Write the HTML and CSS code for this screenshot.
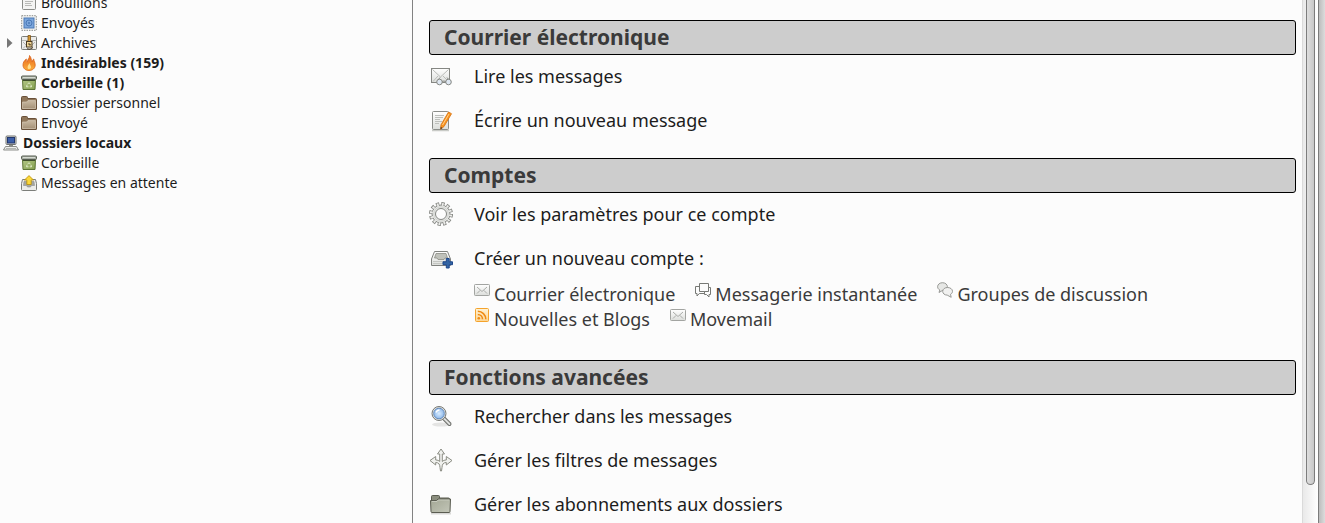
FILE: index.html
```html
<!DOCTYPE html>
<html lang="fr">
<head>
<meta charset="utf-8">
<title>Courrier</title>
<link rel="stylesheet" href="styles.css">
</head>
<body>
<svg class="defs" aria-hidden="true">
  <defs>
    <linearGradient id="g-paper" x1="0" y1="0" x2="0" y2="1"><stop offset="0" stop-color="#fff"/><stop offset="1" stop-color="#dcdedb"/></linearGradient>
    <linearGradient id="g-tan" x1="0" y1="0" x2="0" y2="1"><stop offset="0" stop-color="#c9b9a2"/><stop offset="1" stop-color="#a69278"/></linearGradient>
    <linearGradient id="g-olive" x1="0" y1="0" x2="1" y2="1"><stop offset="0" stop-color="#a3a795"/><stop offset="1" stop-color="#c3c6b8"/></linearGradient>
    <linearGradient id="g-green" x1="0" y1="0" x2="1" y2="1"><stop offset="0" stop-color="#b3c787"/><stop offset="1" stop-color="#84a04e"/></linearGradient>
    <linearGradient id="g-fire" x1="0" y1="0" x2="0" y2="1"><stop offset="0" stop-color="#e9661d"/><stop offset="1" stop-color="#fbb03c"/></linearGradient>
    <linearGradient id="g-rss" x1="0" y1="0" x2="0" y2="1"><stop offset="0" stop-color="#fff3d6"/><stop offset="1" stop-color="#fbd594"/></linearGradient>
    <radialGradient id="g-lens"><stop offset="0" stop-color="#d9ecff"/><stop offset="1" stop-color="#8fb9ea"/></radialGradient>
  </defs>
  <symbol id="i-folder" viewBox="0 0 16 16">
    <path d="M.5 14V2.500q0-1 1-1h4q1 0 1 1v1h8q1 0 1 1V14q0 .5-.5.5H1q-.5 0-.5-.5z" fill="#8f7558" stroke="#695039"/>
    <path d="M1.500 13.500V7h4l1.500-1.500h7.500v8z" fill="url(#g-tan)" stroke="#d3c6b3" stroke-width=".7"/>
  </symbol>
  <symbol id="i-trash" viewBox="0 0 16 16">
    <path d="M1.500 4.500h13l-.5 10H2z" fill="url(#g-green)" stroke="#5d7537"/>
    <path d="M2 5.500h12" stroke="#3f4f2b"/>
    <rect x=".5" y="1" width="15" height="3.500" rx="1" fill="#a9afa5" stroke="#565d51"/>
    <path d="M2 2.500h12" stroke="#d5dad1"/>
    <path d="M6.500 9.300 8 7.700l1.500 1.600M6 10l-.5 1.800h2M10 10l.6 1.800H8.700" fill="none" stroke="#e8f2d4" stroke-width=".9"/>
  </symbol>
  <symbol id="i-mail" viewBox="0 0 16 16">
    <rect x=".5" y="2.500" width="15" height="11" rx=".8" fill="url(#g-paper)" stroke="#a2a4a1"/>
    <path d="M3 5l5 4.500L13 5M3 11.500 6.200 8.300M13 11.500 9.800 8.300" fill="none" stroke="#aaaca9"/>
  </symbol>
</svg>

<div class="window">
  <nav class="folders" aria-label="Dossiers">
    <ul class="tree">
      <li class="node"><svg class="ico" viewBox="0 0 16 16"><rect x="1.500" y=".5" width="13" height="14" rx="1" fill="#f4f4f3" stroke="#8b8d89"/><path d="M4 6.500h8M4 8.500h6M4 10.500h7" stroke="#b9bab7"/></svg>Brouillons</li>
      <li class="node"><svg class="ico" viewBox="0 0 16 16"><rect x=".7" y=".7" width="14.600" height="14.600" fill="#f3f3f1" stroke="#8b8d89" stroke-dasharray="1.500 1"/><rect x="3" y="3" width="10" height="10" fill="#7ba6dc" stroke="#4a78b6"/><circle cx="8" cy="8" r="3" fill="none" stroke="#4a78b6"/><circle cx="8" cy="8" r="1" fill="#4a78b6"/></svg>Envoyés</li>
      <li class="node node-parent"><svg class="twisty" viewBox="0 0 6 10"><path d="M0 0v10l5.500-5z" fill="#777"/></svg><svg class="ico" viewBox="0 0 16 16"><rect x=".5" y="1.500" width="15" height="13" rx="1" fill="#ececea" stroke="#7c7e7a"/><path d="M1 5.500h14M2 7l4 4M14 7l-4 4M2 13.500l3-3" stroke="#b4b6b2" fill="none"/><path d="M7 .5h2.500v6H7z" fill="#d79a33" stroke="#7b5216" stroke-width=".8"/><rect x="5.500" y="6.500" width="5.500" height="5.500" fill="#efd596" stroke="#4a3a22"/><path d="M8 8v1.800h2M6 13.800q3 1.500 6-1.300" stroke="#4a3a22" fill="none"/></svg>Archives</li>
      <li class="node node-bold"><svg class="ico" viewBox="0 0 16 16"><path d="M8.500.5C9 3 6.500 4 6.300 7 5.200 6.400 5.200 5 5.400 4 3 5.700 2 7.800 2 10c0 3.500 2.700 5.500 6 5.500s6.200-2 6.200-5.500c0-2.500-1.300-4-1.500-6-1 .8-1.400 1.800-1.400 3C10 5.500 10.500 2.500 8.500.5z" fill="url(#g-fire)" stroke="#d9641a" stroke-width=".8"/><path d="M8.500 8c-.5 1.500-1.900 2.500-1.900 4.200 0 1.300.6 1.800 1.600 1.800s1.900-.8 1.800-2C9.900 10.500 8.700 9.500 8.500 8z" fill="#ffe08f"/></svg>Indésirables (159)</li>
      <li class="node node-bold"><svg class="ico"><use href="#i-trash"/></svg>Corbeille (1)</li>
      <li class="node"><svg class="ico"><use href="#i-folder"/></svg>Dossier personnel</li>
      <li class="node"><svg class="ico"><use href="#i-folder"/></svg>Envoyé</li>
      <li class="node node-root node-bold"><svg class="ico" viewBox="0 0 16 16"><rect x="3" y="1" width="10" height="8.500" rx="1" fill="#dcdcda" stroke="#70726e"/><rect x="4.500" y="2.500" width="7" height="5.500" fill="#3c5fa8" stroke="#22376c"/><path d="M6 10h4v1.500H6z" fill="#8b8d89"/><path d="M2.500 11.500h11l2 3.500H.5z" fill="#eeeeec" stroke="#8b8d89"/><path d="M3 13.500h10" stroke="#b5b7b3"/></svg>Dossiers locaux</li>
      <li class="node"><svg class="ico"><use href="#i-trash"/></svg>Corbeille</li>
      <li class="node"><svg class="ico" viewBox="0 0 16 16"><path d="M1.500 4.500h13l1 4v6q0 1-1 1h-13q-1 0-1-1v-6z" fill="#ececea" stroke="#7c7e7a"/><path d="M3 6.500h10l.5 4h-3l-1 1.500h-3l-1-1.500h-3z" fill="#a4a6a2" stroke="#8b8d89" stroke-width=".6"/><path d="M8 .6 12.500 5h-2.300v4.500H5.800V5H3.500z" fill="#fbd83a" stroke="#b78d06" stroke-width=".8"/></svg>Messages en attente</li>
    </ul>
  </nav>

  <main class="account">
    <section class="group">
      <h2 class="title">Courrier électronique</h2>
      <a class="action" href="#"><svg class="big" viewBox="0 0 24 24"><rect x="2.500" y="4.500" width="18" height="14" fill="url(#g-paper)" stroke="#858783"/><path d="M3.500 5.500 11.500 13l8-7.500M4 17.500l5-5.500M19 17l-5-5" fill="none" stroke="#b9bbb7"/><path d="M9 16l2-2.500M20 16l-2-2.500" stroke="#858783"/><circle cx="10.500" cy="18" r="2.800" fill="#dfe8f3" stroke="#858783"/><circle cx="19.500" cy="18" r="2.800" fill="#dfe8f3" stroke="#858783"/><path d="M13.300 17.500q1.500-1 3.400 0" fill="none" stroke="#858783"/></svg>Lire les messages</a>
      <a class="action" href="#"><svg class="big" viewBox="0 0 24 24"><path d="M3 22.500h17" stroke="#c9cbc7" stroke-width="1.500"/><rect x="3.500" y="3.500" width="16" height="18" rx="1" fill="url(#g-paper)" stroke="#8b8d89"/><path d="M6 7.500h9M6 9.500h8M6 11.500h5M6 13.500h7M6 15.500h4" stroke="#bdbfbb"/><path d="M19.500 4l3 1.700L15 18.500l-3.500 2.800.5-4.500z" fill="#f9941f" stroke="#d9781a" stroke-width=".9"/><path d="M20 6l-6.500 11" stroke="#ffd08b"/><path d="M11.500 21.300l.3-2.300 1.700 1z" fill="#333"/></svg>Écrire un nouveau message</a>
    </section>

    <section class="group group-accounts">
      <h2 class="title">Comptes</h2>
      <a class="action" href="#"><svg class="big" viewBox="0 0 24 24"><circle cx="12" cy="12" r="10" fill="none" stroke="#858783" stroke-width="4" stroke-dasharray="3.200 2.036"/><circle cx="12" cy="12" r="9" fill="#e6e7e5" stroke="#858783"/><circle cx="12" cy="12" r="9.700" fill="none" stroke="#eeeeec" stroke-width="2.800" stroke-dasharray="1.700 3.379" stroke-dashoffset="-.702"/><circle cx="12" cy="12" r="5.500" fill="#fcfcfc" stroke="#858783"/><circle cx="12" cy="12" r="7.200" fill="none" stroke="#d0d2ce"/></svg>Voir les paramètres pour ce compte</a>
      <a class="action" href="#"><svg class="big" viewBox="0 0 24 24"><path d="M5.500 5.500h13l3 7.500v6.500h-19V13z" fill="url(#g-paper)" stroke="#80827e"/><path d="M7 7.500h10l1.500 4.500H16l-1 1.500H9L8 12H5.500z" fill="#c0c2bb" stroke="#8b8d84" stroke-width=".8"/><path d="M4 15.500h16M4 17.500h12" stroke="#c4c6c2"/><path d="M17.300 12.500h2.900v3.300h3.300v2.900h-3.300V22h-2.900v-3.300H14v-2.900h3.300z" fill="#3465a4" stroke="#1d468b"/></svg>Créer un nouveau compte :</a>
      <div class="kinds">
        <a class="kind" href="#"><svg class="ico"><use href="#i-mail"/></svg>Courrier électronique</a>
        <a class="kind" href="#"><svg class="ico" viewBox="0 0 16 16"><path d="M4.500 4.500h-4v7h1.500v2.500l2.300-2.500h5.200v-2" fill="#fcfcfc" stroke="#777975"/><path d="M4.500 1.500h9v8h-9z" fill="#fcfcfc" stroke="#777975"/><path d="M13.500 5.500h2v7H14v2.500L11.500 12.500h-2v-3h4z" fill="#fcfcfc" stroke="#777975"/></svg>Messagerie instantanée</a>
        <a class="kind" href="#"><svg class="ico" viewBox="0 0 16 16"><path d="M5.500.7C2.800.7.6 2.400.6 4.700c0 1.600 1 2.700 2.200 3.300L2 10.500l3.400-2c2.800 0 5-1.600 5-3.800S8.300.7 5.500.7z" fill="#e6e7e5" stroke="#8d8f8b" stroke-width=".9"/><path d="M10.500 5.500c-2.500 0-4.800 1.500-4.800 3.800s2 3.800 4.500 3.800l4 2.200-.7-3c1.200-.6 2-1.700 2-3 0-2.200-2.200-3.800-5-3.800z" fill="#f1f1f0" stroke="#8d8f8b" stroke-width=".9"/></svg>Groupes de discussion</a>
        <a class="kind" href="#"><svg class="ico" viewBox="0 0 16 16"><rect x="1.500" y="1.500" width="13" height="13" rx="1" fill="url(#g-rss)" stroke="#f5a32b"/><circle cx="4.800" cy="11.300" r="1.300" fill="#f08a12"/><path d="M3.800 7.500a4.700 4.700 0 0 1 4.700 4.700M3.800 4.300a8 8 0 0 1 8 8" fill="none" stroke="#f08a12" stroke-width="1.500"/></svg>Nouvelles et Blogs</a>
        <a class="kind" href="#"><svg class="ico"><use href="#i-mail"/></svg>Movemail</a>
      </div>
    </section>

    <section class="group">
      <h2 class="title">Fonctions avancées</h2>
      <a class="action" href="#"><svg class="big" viewBox="0 0 24 24"><ellipse cx="12" cy="20.500" rx="9" ry="2" fill="#e4e4e3"/><path d="M14.500 14l6 6" stroke="#6f716d" stroke-width="4" stroke-linecap="round"/><path d="M15 14.500l5.500 5.500" stroke="#e0e1df" stroke-width="1.800" stroke-linecap="round"/><circle cx="10" cy="9.500" r="7" fill="#dfe0de" stroke="#777975"/><circle cx="10" cy="9.500" r="5.300" fill="url(#g-lens)" stroke="#5f86b8" stroke-width=".9"/><path d="M7 8.500q1-2.500 3.500-2.500" fill="none" stroke="#fff" stroke-width="1.500"/></svg>Rechercher dans les messages</a>
      <a class="action" href="#"><svg class="big" viewBox="0 0 24 24"><path d="M12 1l3.500 5h-2.200v7.500c1-1 2-1.500 4-1.500V8.500L23 12.500 17.300 17v-2.500c-3 .2-4.100 1.500-4.300 5L12.500 23h-1l-.5-3.500c-.2-3.500-1.300-4.800-4.300-5V17L1 12.500 6.700 8.500V12c2 0 3 .5 4 1.500V6H8.500z" fill="#f0f1ee" stroke="#8b8d84"/></svg>Gérer les filtres de messages</a>
      <a class="action" href="#"><svg class="big" viewBox="0 0 24 24"><path d="M2 21.500h20" stroke="#d8d8d6" stroke-width="2"/><path d="M2.500 19V4.500q0-1 1-1h6q1 0 1 1V6h9q1 0 1 1v3" fill="#8b8e7e" stroke="#5a5c51"/><path d="M1.500 8.500h6l1.500-1.500h12.500l-.5 12.500q0 1-1 1H3q-1 0-1-1z" fill="url(#g-olive)" stroke="#5a5c51"/><path d="M3 9.500h5L9.500 8H20" fill="none" stroke="#cfd2c6" stroke-width=".8"/></svg>Gérer les abonnements aux dossiers</a>
    </section>
  </main>

  <div class="scrollbar" aria-hidden="true"><div class="thumb"></div></div>
  <div class="edge"></div>
</div>
</body>
</html>
```
FILE: styles.css
```css
* {
  box-sizing: border-box;
}

body {
  margin: 0;
  background: #fcfcfc;
  color: #1c1c1c;
  font-family: "Noto Sans", "Open Sans", sans-serif;
}

.defs {
  position: absolute;
  width: 0;
  height: 0;
}

.window {
  display: flex;
  height: 100vh;
  overflow: hidden;
}

.folders {
  flex: 0 0 413px;
  overflow: hidden;
  border-right: 1px solid #828282;
}

/* The list is scrolled by part of a row */
.tree {
  margin: -7px 0 0;
  padding: 0;
  list-style: none;
}

.node {
  display: flex;
  align-items: center;
  gap: 4px;
  height: 20px;
  padding-left: 21px;
  font-size: 14px;
  line-height: 20px;
  white-space: nowrap;
}

.node-parent {
  padding-left: 7px;
}

.node-root {
  padding-left: 3px;
}

.node-bold {
  font-weight: 700;
}

.twisty {
  width: 6px;
  height: 10px;
  margin-right: 4px;
}

.ico {
  flex: none;
  width: 16px;
  height: 16px;
}

.account {
  flex: 1;
  min-width: 0;
  padding: 20px 6px 0 16px;
  overflow: hidden;
}

.group {
  margin-bottom: 15px;
}

.group-accounts {
  margin-bottom: 28px;
}

.title {
  margin: 0;
  padding: 0 14px;
  border: 1px solid #000;
  border-radius: 3px;
  background: #cdcdcd;
  color: #3a3a3a;
  font-size: 21px;
  line-height: 33px;
}

.action {
  display: flex;
  align-items: center;
  gap: 21px;
  height: 44px;
  padding-bottom: 2px;
  color: #1c1c1c;
  font-size: 18px;
  line-height: 24px;
  text-decoration: none;
}

.big {
  flex: none;
  width: 24px;
  height: 24px;
}

.kinds {
  display: flex;
  flex-wrap: wrap;
  column-gap: 20px;
  padding: 1px 0 0 45px;
}

.kind {
  display: flex;
  gap: 4px;
  color: #3a3a3a;
  font-size: 18px;
  line-height: 25px;
  text-decoration: none;
}

.scrollbar {
  display: flex;
  flex: 0 0 16px;
  padding: 0 3px 38px;
  border-left: 1px solid #dadada;
  background: linear-gradient(to right, #e9e9e9, #fff);
}

.thumb {
  flex: 1;
  border: 1px solid #7c7c7c;
  border-top: 0;
  border-radius: 0 0 5px 5px;
  background: linear-gradient(to right, #dedede, #c8c8c8);
}

.edge {
  flex: 0 0 7px;
  border-left: 1px solid #7c7c7c;
  background: linear-gradient(to right, #bdbdbd, #dcdcdc);
}
```
